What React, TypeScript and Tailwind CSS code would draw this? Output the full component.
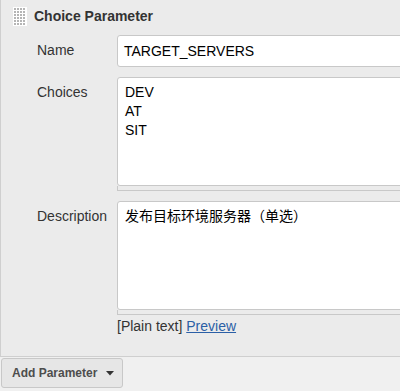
import React from "react";

function Grip() {
  const dots: React.ReactElement[] = [];
  for (let r = 0; r < 6; r++) {
    for (let c = 0; c < 4; c++) {
      dots.push(
        <rect key={`${r}-${c}`} x={1 + c * 3} y={1 + r * 3} width={2} height={2} fill="#b5b5b5" />
      );
    }
  }
  return (
    <svg width="14" height="19" viewBox="0 0 14 19" className="block bg-white shrink-0">
      {dots}
    </svg>
  );
}

function TextArea({ lines, height }: { lines: string[]; height: string }) {
  return (
    <div className="w-[300px] shrink-0">
      <div
        className={`${height} bg-white border border-[#c8c8c8] rounded-[3px] px-[7px] pt-[5px] text-[14px] leading-[19px] text-black`}
      >
        {lines.map((l, i) => (
          <div key={i}>{l}</div>
        ))}
      </div>
      <div className="h-[5px] border-l border-b border-[#c8c8c8] bg-[#ebebeb]" />
    </div>
  );
}

export default function App() {
  return (
    <div
      className="w-[400px] h-[391px] overflow-hidden bg-[#f0f0f0] text-[#333]"
      style={{ fontFamily: '"Liberation Sans", Arial, "Noto Sans CJK SC", sans-serif' }}
    >
      <div className="h-[357px] bg-[#ebebeb] border-l border-b border-[#cfcfcf] overflow-hidden">
        <div className="flex items-center pt-[6px] pl-[12px] h-[26px]">
          <Grip />
          <span className="ml-[7px] font-bold text-[14px] text-[#333] leading-none whitespace-nowrap">Choice Parameter</span>
        </div>
        <div className="flex mt-[9px]">
          <div className="w-[116px] shrink-0 pl-[36px] pt-[5px] text-[14px]">Name</div>
          <div className="w-[300px] shrink-0 h-[32px] bg-white border border-[#c8c8c8] rounded-[3px] flex items-center px-[6px] text-[14px] text-black">
            TARGET_SERVERS
          </div>
        </div>
        <div className="flex mt-[10px]">
          <div className="w-[116px] shrink-0 pl-[36px] pt-[5px] text-[14px]">Choices</div>
          <TextArea lines={["DEV", "AT", "SIT"]} height="h-[109px]" />
        </div>
        <div className="flex mt-[10px]">
          <div className="w-[116px] shrink-0 pl-[36px] pt-[5px] text-[14px]">Description</div>
          <div className="shrink-0">
            <TextArea lines={["发布目标环境服务器（单选）"]} height="h-[109px]" />
            <div className="text-[14px] text-[#333] mt-[2px] leading-[19px] whitespace-nowrap">
              [Plain text]{" "}
              <span className="text-[#2b5fa6] underline">Preview</span>
            </div>
          </div>
        </div>
      </div>
      <div className="pl-[1px] pt-[1px]">
        <div className="w-[122px] h-[30px] bg-[#e6e6e6] border border-[#c8c8c8] rounded-[3px] flex items-center pl-[10px] text-[12px] font-bold text-[#4d4d4d] whitespace-nowrap">
          Add Parameter
          <svg width="8" height="5" viewBox="0 0 8 5" className="ml-[9px] shrink-0">
            <path d="M0 0 H8 L4 4.5 Z" fill="#333" />
          </svg>
        </div>
      </div>
    </div>
  );
}
